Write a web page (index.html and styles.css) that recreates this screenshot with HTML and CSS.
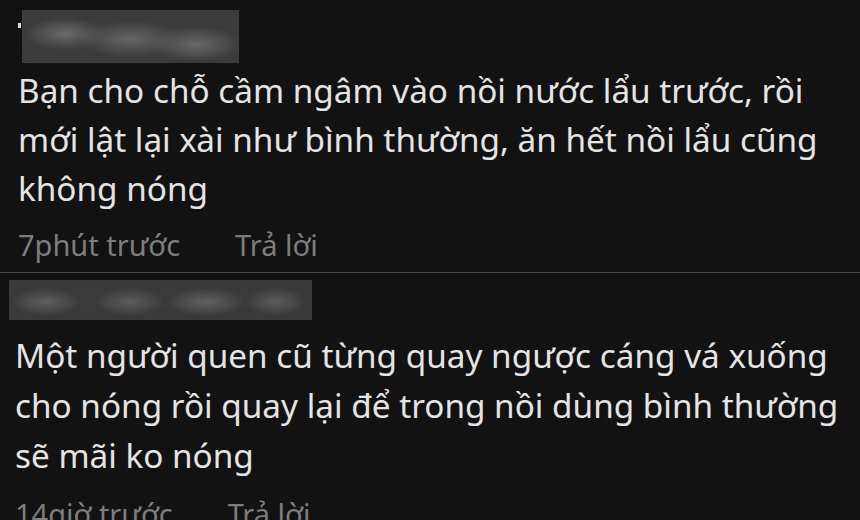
FILE: index.html
```html
<!DOCTYPE html>
<html lang="vi">
<head>
<meta charset="utf-8">
<link rel="stylesheet" href="styles.css">
</head>
<body>
<div class="feed">
  <div class="comment c1">
    <div class="author">
      <span class="dot"></span>
      <div class="blur b1"></div>
    </div>
    <p class="body">Bạn cho chỗ cầm ngâm vào nồi nước lẩu trước, rồi mới lật lại xài như bình thường, ăn hết nồi lẩu cũng không nóng</p>
    <div class="meta"><span class="time">7phút trước</span><span class="reply">Trả lời</span></div>
  </div>
  <div class="comment c2">
    <div class="author">
      <div class="blur b2"></div>
    </div>
    <p class="body">Một người quen cũ từng quay ngược cáng vá xuống cho nóng rồi quay lại để trong nồi dùng bình thường sẽ mãi ko nóng</p>
    <div class="meta"><span class="time">14giờ trước</span><span class="reply">Trả lời</span></div>
  </div>
</div>
</body>
</html>
```
FILE: styles.css
```css
html, body {
  margin: 0;
  padding: 0;
  background: #121212;
  width: 860px;
  height: 520px;
  overflow: hidden;
}
.feed {
  font-family: "Noto Sans", "Open Sans", sans-serif;
  color: #e4e4e4;
}
.comment {
  display: flex;
  flex-direction: column;
}
.c1 {
  padding: 10px 0 0 18px;
  height: 273px;
  border-bottom: 1px solid #4a4a4a;
  box-sizing: border-box;
}
.c2 {
  padding: 7px 0 0 15px;
}
.author {
  display: flex;
  align-items: flex-start;
}
.dot {
  width: 3px;
  height: 5px;
  background: #dcdcdc;
  margin-top: 13px;
  margin-right: 1px;
}
.blur {
  background:
    radial-gradient(ellipse 40px 16px at 20% 45%, #6a6a6a, transparent),
    radial-gradient(ellipse 50px 18px at 50% 55%, #666, transparent),
    radial-gradient(ellipse 45px 18px at 80% 65%, #686868, transparent),
    #3c3c3c;
  box-shadow: 0 0 6px 3px rgba(60,60,60,0.35) inset;
}
.b1 {
  width: 217px;
  height: 53px;
}
.b2 {
  width: 303px;
  height: 40px;
  margin-left: -6px;
  background:
    radial-gradient(ellipse 35px 14px at 12% 55%, #5e5e5e, transparent),
    radial-gradient(ellipse 35px 14px at 40% 55%, #5c5c5c, transparent),
    radial-gradient(ellipse 40px 14px at 65% 55%, #616161, transparent),
    radial-gradient(ellipse 30px 14px at 88% 55%, #5c5c5c, transparent),
    #3a3a3a;
}
.body {
  margin: 0;
  font-size: 33.3px;
  line-height: 49px;
  width: 830px;
  margin-top: 3px;
}
.c2 .body {
  margin-top: 10px;
  line-height: 50px;
}
.meta {
  display: flex;
  gap: 55px;
  font-size: 29px;
  color: #7d7d7d;
  margin-top: 12px;
}
.c2 .meta {
  margin-top: 14px;
}
```
